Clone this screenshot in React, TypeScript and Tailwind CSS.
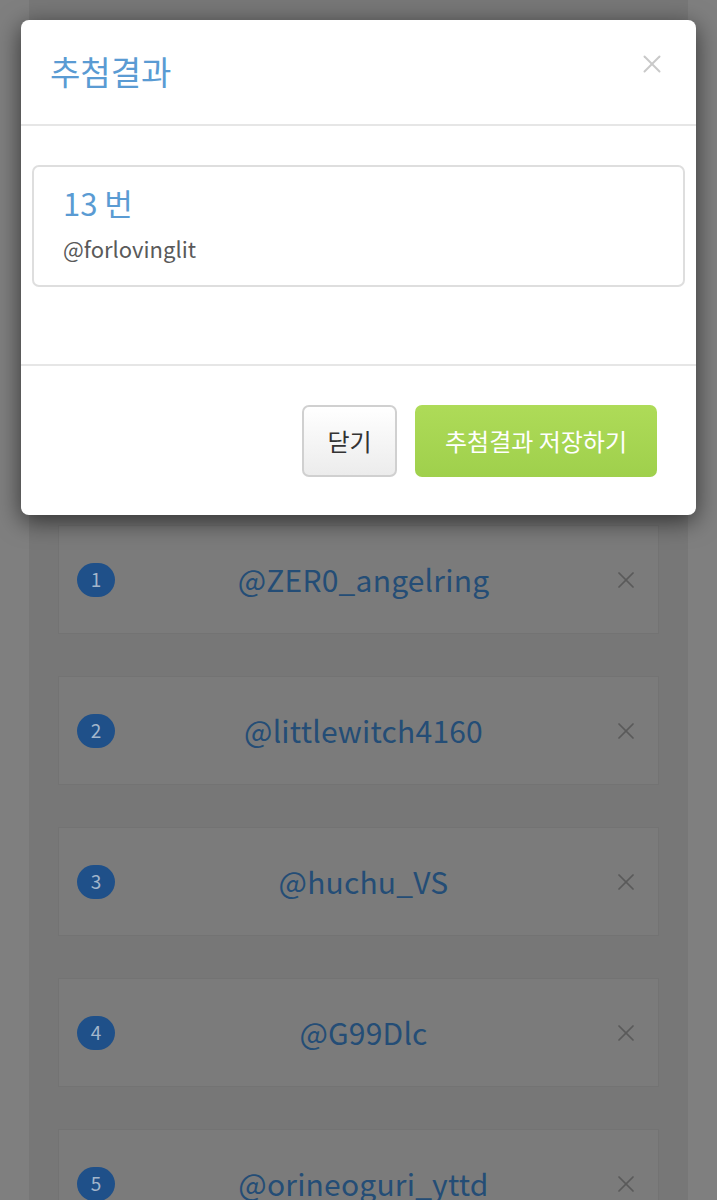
import { X } from 'lucide-react'

const entries = [
  { no: 1, name: '@ZER0_angelring' },
  { no: 2, name: '@littlewitch4160' },
  { no: 3, name: '@huchu_VS' },
  { no: 4, name: '@G99Dlc' },
  { no: 5, name: '@orineoguri_yttd' },
]

function EntryCard({ no, name }: { no: number; name: string }) {
  return (
    <div className="shrink-0 h-[109px] border border-[#737373] bg-[#7b7b7b] flex items-center px-[18px]">
      <span className="w-[38px] h-[34px] rounded-full bg-[#1f5089] text-[#a3b6cb] text-[19px] flex items-center justify-center">
        {no}
      </span>
      <span className="flex-1 text-center text-[30px] text-[#244d76] tracking-[0.2px]">{name}</span>
      <X className="w-[28px] h-[28px] text-[#5a5a5a]" strokeWidth={1.5} />
    </div>
  )
}

export default function App() {
  return (
    <div
      className="relative h-[1200px] overflow-hidden bg-[#7f7f7f]"
      style={{ fontFamily: '"Noto Sans CJK KR", "Noto Sans", sans-serif' }}
    >
      {/* dimmed entry list behind the dialog */}
      <div className="mx-[29px] h-full bg-[#777777] px-[29px] pt-[525px] flex flex-col gap-[42px]">
        {entries.map((e) => (
          <EntryCard key={e.no} no={e.no} name={e.name} />
        ))}
      </div>

      {/* result dialog */}
      <div className="absolute top-[20px] left-[21px] w-[675px] bg-white rounded-[8px] shadow-[0_6px_24px_rgba(0,0,0,0.6)]">
        <div className="h-[106px] flex items-center justify-between pl-[29px] pr-[29px] border-b-2 border-[#e6e6e6]">
          <h2 className="text-[33px] text-[#5a9bd3] font-normal">추첨결과</h2>
          <X className="w-[30px] h-[30px] text-[#c9c9c9] -mt-[16px]" strokeWidth={1.6} />
        </div>

        <div className="px-[11px] pt-[39px] pb-[77px] border-b-2 border-[#e6e6e6]">
          <div className="border-2 border-[#dedede] rounded-[7px] px-[29px] pt-[14px] pb-[20px]">
            <div className="text-[31px] text-[#5a9bd3] leading-[44px]">13 번</div>
            <div className="text-[22px] text-[#5a5a5a] leading-[34px] mt-[6px]">@forlovinglit</div>
          </div>
        </div>

        <div className="flex justify-end gap-[18px] pt-[39px] pb-[38px] pr-[39px]">
          <button className="h-[72px] w-[95px] rounded-[7px] border-2 border-[#d0d0d0] bg-gradient-to-b from-white to-[#ececec] text-[24px] text-[#333]">
            닫기
          </button>
          <button className="h-[72px] w-[242px] rounded-[7px] bg-gradient-to-b from-[#aedb58] to-[#9fd04c] text-[24px] text-white">
            추첨결과 저장하기
          </button>
        </div>
      </div>
    </div>
  )
}
